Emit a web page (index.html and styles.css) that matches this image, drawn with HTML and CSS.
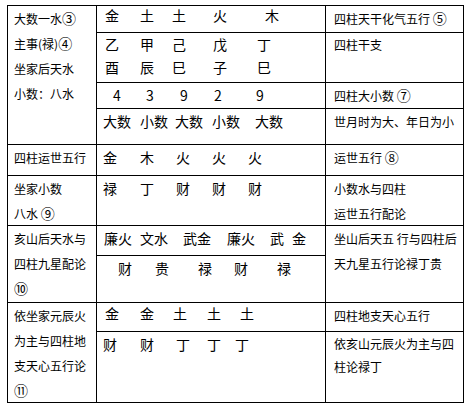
FILE: index.html
```html
<!DOCTYPE html>
<html lang="zh-CN">
<head>
<meta charset="utf-8">
<title>四柱配论</title>
<link rel="stylesheet" href="styles.css">
</head>
<body>
<div class="sheet">
  <div class="cell c1 span4">大数一水<span class="num">③</span><br>主事(禄)<span class="num">④</span><br>坐家后天水<br>小数：八水</div>
  <div class="cell c2 lh18"><div class="line g1"><span>金</span><span>土</span><span>土</span><span>火</span><span>木</span></div></div>
  <div class="cell c3">四柱天干化气五行 <span class="num">⑤</span></div>

  <div class="cell c2 lh23">
    <div class="line g2"><span>乙</span><span>甲</span><span>己</span><span>戊</span><span>丁</span></div>
    <div class="line g2"><span>酉</span><span>辰</span><span>巳</span><span>子</span><span>巳</span></div>
  </div>
  <div class="cell c3 lh23">四柱干支</div>

  <div class="cell c2"><div class="line g3"><span>4</span><span>3</span><span>9</span><span>2</span><span>9</span></div></div>
  <div class="cell c3">四柱大小数 <span class="num">⑦</span></div>

  <div class="cell c2"><div class="line g4"><span>大数</span><span>小数</span><span>大数</span><span>小数</span><span>大数</span></div></div>
  <div class="cell c3">世月时为大、年日为小</div>

  <div class="cell c1">四柱运世五行</div>
  <div class="cell c2"><div class="line g5"><span>金</span><span>木</span><span>火</span><span>火</span><span>火</span></div></div>
  <div class="cell c3">运世五行 <span class="num">⑧</span></div>

  <div class="cell c1">坐家小数<br>八水 <span class="num">⑨</span></div>
  <div class="cell c2"><div class="line g5"><span>禄</span><span>丁</span><span>财</span><span>财</span><span>财</span></div></div>
  <div class="cell c3">小数水与四柱<br>运世五行配论</div>

  <div class="cell c1 span2">亥山后天水与<br>四柱九星配论<br><span class="num">⑩</span></div>
  <div class="cell c2"><div class="line g7"><span>廉火</span><span>文水</span><span>武金</span><span>廉火</span><span>武</span><span>金</span></div></div>
  <div class="cell c3 span2">坐山后天五 行与四柱后<br>天九星五行论禄丁贵</div>
  <div class="cell c2"><div class="line g8"><span>财</span><span>贵</span><span>禄</span><span>财</span><span>禄</span></div></div>

  <div class="cell c1 span2">依坐家元辰火<br>为主与四柱地<br>支天心五行论<br><span class="num">⑪</span></div>
  <div class="cell c2 lh20"><div class="line g9"><span>金</span><span>金</span><span>土</span><span>土</span><span>土</span></div></div>
  <div class="cell c3">四柱地支天心五行</div>
  <div class="cell c2"><div class="line g10"><span>财</span><span>财</span><span>丁</span><span>丁</span><span>丁</span></div></div>
  <div class="cell c3 lh23">依亥山元辰火为主与四<br>柱论禄丁</div>
</div>
</body>
</html>
```

FILE: styles.css
```css
html, body {
  margin: 0;
  padding: 0;
  background: #fff;
}

body {
  font-family: "Noto Sans CJK SC", "Noto Sans", sans-serif;
  color: #000;
}

.sheet {
  display: grid;
  grid-template-columns: 88px 228px 137px;
  grid-template-rows: 26px 49px 25px 35px 30px 49px 29px 46px 28px 70px;
  gap: 1px;
  background: #000;
  border: 1px solid #000;
  width: max-content;
  margin: 5px 0 0 7px;
}

.cell {
  background: #fff;
  overflow: hidden;
  white-space: nowrap;
  line-height: 25px;
}

.span4 { grid-row: span 4; }
.span2 { grid-row: span 2; }

.c1 {
  font-size: 12px;
  padding-left: 6px;
}

.c3 {
  font-size: 12px;
  padding-left: 8px;
}

.c2 {
  font-size: 14px;
}

.num {
  font-size: 14px;
  line-height: 1;
}

.lh18 { line-height: 18px; }
.lh20 { line-height: 20px; }
.lh23 { line-height: 23px; }

.line {
  display: grid;
}

.g1 { padding-left: 8px;  grid-template-columns: 35px 32px 41px 52px auto; }
.g2 { padding-left: 8px;  grid-template-columns: 35px 32px 41px 44px auto; }
.g3 { padding-left: 16px; grid-template-columns: 33px 34px 34px 42px auto; }
.g4 { padding-left: 6px;  grid-template-columns: 37px 35px 37px 43px auto; }
.g5 { padding-left: 6px;  grid-template-columns: 37px 36px 36px 36px auto; }
.g7 { padding-left: 7px;  grid-template-columns: 36px 43px 44px 43px 22px auto; }
.g8 { padding-left: 21px; grid-template-columns: 37px 43px 36px 43px auto; }
.g9 { padding-left: 8px;  grid-template-columns: 35px 33px 34px 33px auto; }
.g10 { padding-left: 6px; grid-template-columns: 37px 36px 31px 28px auto; }
```
